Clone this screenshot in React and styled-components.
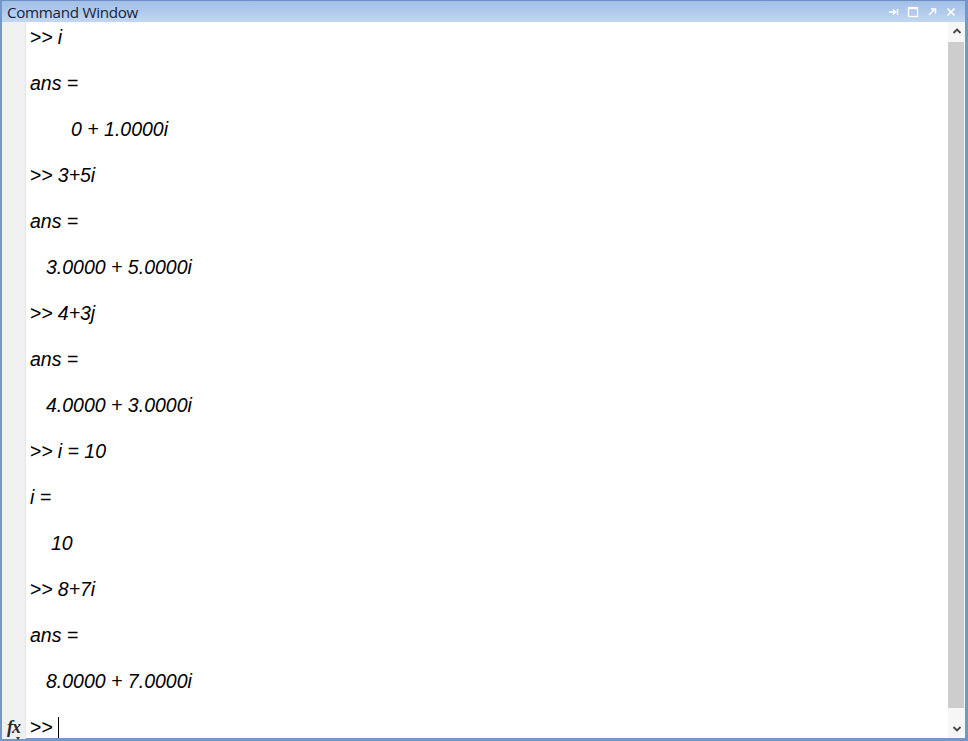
import React from "react";
import styled, { createGlobalStyle } from "styled-components";

const Global = createGlobalStyle`
  html, body { margin: 0; padding: 0; background: #ffffff; }
  body { width: 968px; height: 741px; overflow: hidden; }
`;

const Window = styled.div`
  width: 968px;
  height: 741px;
  box-sizing: border-box;
  display: flex;
  flex-direction: column;
  background: #fff;
  border-left: 2px solid #7396cb;
  border-right: 3px solid #7396cb;
  border-bottom: 3px solid #7396cb;
  border-top: 1px solid #6d8fc2;
`;

const TitleBar = styled.div`
  height: 21px;
  flex: none;
  display: flex;
  align-items: center;
  justify-content: space-between;
  background: linear-gradient(#a1bfe6 0%, #b1caeb 50%, #c2d6f0 100%);
  padding: 0 8px 0 5px;
`;

const Title = styled.span`
  font-family: "Open Sans", "DejaVu Sans", sans-serif;
  font-size: 15.2px;
  color: #14263d;
  letter-spacing: -0.3px;
`;

const TitleButtons = styled.div`
  display: flex;
  align-items: center;
  gap: 7px;
`;

const TBtn = styled.svg`
  width: 12px;
  height: 12px;
  display: block;
`;

const Body = styled.div`
  flex: 1;
  display: flex;
  min-height: 0;
`;

const TextArea = styled.div`
  flex: 1;
  display: grid;
  grid-template-columns: 24px 1fr;
  min-width: 0;
`;

const Gutter = styled.div`
  background: #f0f0f0;
  border-right: 1px solid #e6e6e6;
  display: flex;
  flex-direction: column;
  justify-content: flex-end;
  align-items: center;
  padding-bottom: 3px;
`;

const Content = styled.div`
  padding: 4px 0 0 4px;
  display: flex;
  flex-direction: column;
  font-family: "Liberation Sans", Arial, sans-serif;
  font-size: 19.5px;
  color: #000;
`;

const Line = styled.div`
  height: 23px;
  line-height: 23px;
  white-space: pre;
  font-style: italic;
  padding-left: ${(p) => p.$indent || 0}px;
  display: flex;
  align-items: center;
`;

const Prompt = styled.span`
  font-style: normal;
  margin-right: 5px;
`;

const Caret = styled.span`
  display: inline-block;
  width: 1px;
  height: 21px;
  background: #000;
`;

const Fx = styled.div`
  position: relative;
  font-family: "Liberation Serif", "Times New Roman", serif;
  font-style: italic;
  font-weight: bold;
  font-size: 18px;
  color: #2a2a2a;
  line-height: 18px;
  letter-spacing: -1px;
`;

const FxArrow = styled.span`
  position: absolute;
  left: 9px;
  bottom: -4px;
  width: 0;
  height: 0;
  border-left: 2.5px solid transparent;
  border-right: 2.5px solid transparent;
  border-top: 3px solid #333;
`;

const Scrollbar = styled.div`
  width: 17px;
  flex: none;
  display: flex;
  flex-direction: column;
  background: #f6f6f6;
`;

const ScrollArrow = styled.div`
  height: 18px;
  flex: none;
  display: flex;
  align-items: center;
  justify-content: center;
`;

const Thumb = styled.div`
  flex: 1;
  margin: 2px 1px 12px 0;
  background: #cdcdcd;
`;

const lines = [
  { p: true, t: "i" },
  {},
  { t: "ans =" },
  {},
  { t: "0 + 1.0000i", i: 41 },
  {},
  { p: true, t: "3+5i" },
  {},
  { t: "ans =" },
  {},
  { t: "3.0000 + 5.0000i", i: 16 },
  {},
  { p: true, t: "4+3j" },
  {},
  { t: "ans =" },
  {},
  { t: "4.0000 + 3.0000i", i: 16 },
  {},
  { p: true, t: "i = 10" },
  {},
  { t: "i =" },
  {},
  { t: "10", i: 21 },
  {},
  { p: true, t: "8+7i" },
  {},
  { t: "ans =" },
  {},
  { t: "8.0000 + 7.0000i", i: 16 },
  {},
];

export default function App() {
  return (
    <>
      <Global />
      <Window>
        <TitleBar>
          <Title>Command Window</Title>
          <TitleButtons>
            <TBtn viewBox="0 0 12 12">
              <path d="M1 6h6M5 3.5L7.5 6 5 8.5M9.5 3v6" stroke="#fff" strokeWidth="1.4" fill="none" />
            </TBtn>
            <TBtn viewBox="0 0 12 12">
              <rect x="1.5" y="1.5" width="9" height="9" stroke="#fff" strokeWidth="1.2" fill="none" />
              <path d="M1.5 2.5h9" stroke="#fff" strokeWidth="1.5" />
            </TBtn>
            <TBtn viewBox="0 0 12 12">
              <path d="M3 9L8.5 3.5M5 3h4.5v4.5" stroke="#fff" strokeWidth="1.5" fill="none" />
            </TBtn>
            <TBtn viewBox="0 0 12 12">
              <path d="M2.5 2.5l7 7M9.5 2.5l-7 7" stroke="#fff" strokeWidth="1.6" fill="none" />
            </TBtn>
          </TitleButtons>
        </TitleBar>
        <Body>
          <TextArea>
            <Gutter>
              <Fx>
                fx
                <FxArrow />
              </Fx>
            </Gutter>
            <Content>
              {lines.map((l, k) => (
                <Line key={k} $indent={l.i}>
                  {l.p && <Prompt>&gt;&gt;</Prompt>}
                  {l.t || ""}
                </Line>
              ))}
              <Line>
                <Prompt>&gt;&gt;</Prompt>
                <Caret />
              </Line>
            </Content>
          </TextArea>
          <Scrollbar>
            <ScrollArrow>
              <svg width="10" height="8" viewBox="0 0 10 8">
                <path d="M1.5 6L5 2.5 8.5 6" stroke="#444" strokeWidth="1.8" fill="none" />
              </svg>
            </ScrollArrow>
            <Thumb />
            <ScrollArrow>
              <svg width="10" height="8" viewBox="0 0 10 8">
                <path d="M1.5 2L5 5.5 8.5 2" stroke="#444" strokeWidth="1.8" fill="none" />
              </svg>
            </ScrollArrow>
          </Scrollbar>
        </Body>
      </Window>
    </>
  );
}
